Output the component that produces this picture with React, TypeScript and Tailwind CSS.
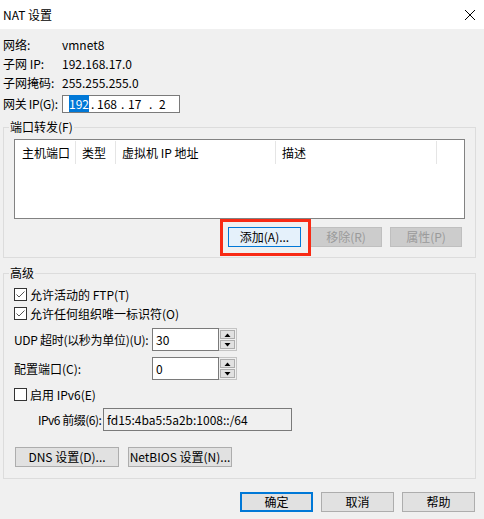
import type { ReactNode } from "react";

function Btn({
  children,
  className = "",
  variant = "normal",
}: {
  children: ReactNode;
  className?: string;
  variant?: "normal" | "hot" | "default" | "disabled";
}) {
  const look = {
    normal: "border border-[#adadad] bg-[#e1e1e1] text-black",
    hot: "border border-[#0078d7] bg-[#e5f1fb] text-black",
    default: "border-2 border-[#0078d7] bg-[#e1e1e1] text-black",
    disabled: "border border-[#bfbfbf] bg-[#cccccc] text-[#9a9a9a]",
  }[variant];
  return (
    <div
      className={`flex h-[20px] shrink-0 items-center justify-center whitespace-nowrap leading-[16px] ${look} ${className}`}
    >
      {children}
    </div>
  );
}

function Check({ checked }: { checked?: boolean }) {
  return (
    <span className="flex h-[13px] w-[13px] shrink-0 items-center justify-center border border-[#333333] bg-white">
      {checked && (
        <svg width="11" height="11" viewBox="0 0 11 11">
          <path d="M1.5 5.5 L4 8 L9.5 2.5" fill="none" stroke="#555" strokeWidth="1" />
        </svg>
      )}
    </span>
  );
}

function Spin({ value }: { value: string }) {
  return (
    <div className="flex h-[23px] shrink-0">
      <div className="flex w-[67px] items-center border border-[#7a7a7a] bg-white pl-[3px] leading-[16px]">
        {value}
      </div>
      <div className="flex w-[18px] flex-col justify-center gap-[1px] border border-l-0 border-[#c4c4c4] bg-[#f0f0f0] px-[1px]">
        <div className="flex h-[9px] items-center justify-center border border-[#adadad] bg-[#e1e1e1]">
          <svg width="7" height="4" viewBox="0 0 7 4">
            <polygon points="0.5,4 3.5,0.5 6.5,4" fill="#000" />
          </svg>
        </div>
        <div className="flex h-[9px] items-center justify-center border border-[#adadad] bg-[#e1e1e1]">
          <svg width="7" height="4" viewBox="0 0 7 4">
            <polygon points="0.5,0 6.5,0 3.5,3.5" fill="#000" />
          </svg>
        </div>
      </div>
    </div>
  );
}

export default function App() {
  return (
    <div
      className="flex h-[519px] w-[484px] flex-col overflow-hidden whitespace-nowrap bg-[#f0f0f0] text-[12px] text-black"
      style={{ fontFamily: '"Microsoft YaHei", "Noto Sans CJK SC", sans-serif' }}
    >
      {/* Title bar */}
      <div className="flex h-[29px] shrink-0 items-center justify-between bg-white pl-[3px] pr-[9px]">
        <span className="leading-[16px]">NAT 设置</span>
        <svg width="10" height="10" viewBox="0 0 10 10">
          <path d="M0 0 L10 10 M10 0 L0 10" stroke="#000" strokeWidth="1" />
        </svg>
      </div>

      <div className="flex flex-col pl-[3px] pr-[8px]">
        {/* Network info */}
        <div className="mt-[6px] flex h-[19px] items-center leading-[16px]">
          <span className="w-[59px] shrink-0">网络:</span>
          <span>vmnet8</span>
        </div>
        <div className="flex h-[19px] items-center leading-[16px]">
          <span className="w-[59px] shrink-0">子网 IP:</span>
          <span>192.168.17.0</span>
        </div>
        <div className="flex h-[19px] items-center leading-[16px]">
          <span className="w-[59px] shrink-0">子网掩码:</span>
          <span>255.255.255.0</span>
        </div>
        <div className="mt-[3px] flex h-[18px] items-center leading-[16px]">
          <span className="w-[59px] shrink-0 tracking-[-0.3px]">网关 IP(G):</span>
          <div className="flex h-[18px] w-[118px] items-center border border-[#7a7a7a] bg-white pl-[6px]">
            <span className="w-[22px]">
              <span className="bg-[#0078d7] text-white">192</span>
            </span>
            <span className="w-[6px]">.</span>
            <span className="w-[24px]">168</span>
            <span className="w-[7px]">.</span>
            <span className="w-[21px]">17</span>
            <span className="w-[10px]">.</span>
            <span>2</span>
          </div>
        </div>

        {/* Port forwarding */}
        <fieldset className="mt-[6px] border border-[#dcdcdc] pb-[10px]">
          <legend className="ml-[5px] h-[16px] px-[1px] leading-[16px]">端口转发(F)</legend>
          <div className="mx-[10px] mt-[4px] h-[80px] border border-[#828282] bg-white">
            <div className="flex h-[25px] items-center leading-[16px]">
              <span className="w-[60px] pl-[7px]">主机端口</span>
              <span className="h-[23px] w-px bg-[#e5e5e5]" />
              <span className="w-[39px] pl-[6px]">类型</span>
              <span className="h-[23px] w-px bg-[#e5e5e5]" />
              <span className="w-[159px] pl-[6px]">虚拟机 IP 地址</span>
              <span className="h-[23px] w-px bg-[#e5e5e5]" />
              <span className="w-[160px] pl-[6px]">描述</span>
              <span className="h-[23px] w-px bg-[#e5e5e5]" />
            </div>
          </div>
          <div className="mt-[8px] flex">
            <div className="relative ml-[224px] w-[73px] shrink-0">
              <Btn variant="hot">添加(A)...</Btn>
              <span className="pointer-events-none absolute -bottom-[9px] -left-[8px] -right-[10px] -top-[8px] border-[3px] border-[#f82a14]" />
            </div>
            <Btn variant="disabled" className="ml-[9px] w-[72px]">
              移除(R)
            </Btn>
            <Btn variant="disabled" className="ml-[8px] w-[72px]">
              属性(P)
            </Btn>
          </div>
        </fieldset>

        {/* Advanced */}
        <fieldset className="mt-[7px] border border-[#dcdcdc] pb-[11px]">
          <legend className="ml-[5px] h-[16px] px-[1px] leading-[16px]">高级</legend>
          <div className="ml-[10px] mt-[4px] flex h-[19px] items-center gap-[3px] leading-[16px]">
            <Check checked />
            <span>允许活动的 FTP(T)</span>
          </div>
          <div className="ml-[10px] flex h-[19px] items-center gap-[3px] leading-[16px]">
            <Check checked />
            <span>允许任何组织唯一标识符(O)</span>
          </div>
          <div className="ml-[10px] mt-[5px] flex items-center leading-[16px]">
            <span className="w-[138px] shrink-0 tracking-[-0.3px]">UDP 超时(以秒为单位)(U):</span>
            <Spin value="30" />
          </div>
          <div className="ml-[10px] mt-[6px] flex items-center leading-[16px]">
            <span className="w-[138px] shrink-0">配置端口(C):</span>
            <Spin value="0" />
          </div>
          <div className="ml-[10px] mt-[5px] flex h-[19px] items-center gap-[3px] leading-[16px]">
            <Check />
            <span>启用 IPv6(E)</span>
          </div>
          <div className="ml-[34px] mt-[4px] flex items-center leading-[16px]">
            <span className="w-[65px] shrink-0 tracking-[-0.5px]">IPv6 前缀(6):</span>
            <div className="flex h-[23px] w-[189px] shrink-0 items-center border border-[#7a7a7a] bg-[#f0f0f0] pl-[3px]">
              fd15:4ba5:5a2b:1008::/64
            </div>
          </div>
          <div className="ml-[11px] mt-[16px] flex gap-[9px]">
            <Btn className="w-[104px]">DNS 设置(D)...</Btn>
            <Btn className="w-[104px]">NetBIOS 设置(N)...</Btn>
          </div>
        </fieldset>

        {/* Dialog buttons */}
        <div className="mt-[13px] flex justify-end gap-[8px] pr-px">
          <Btn variant="default" className="w-[73px]">
            确定
          </Btn>
          <Btn className="w-[73px]">取消</Btn>
          <Btn className="w-[73px]">帮助</Btn>
        </div>
      </div>
    </div>
  );
}
